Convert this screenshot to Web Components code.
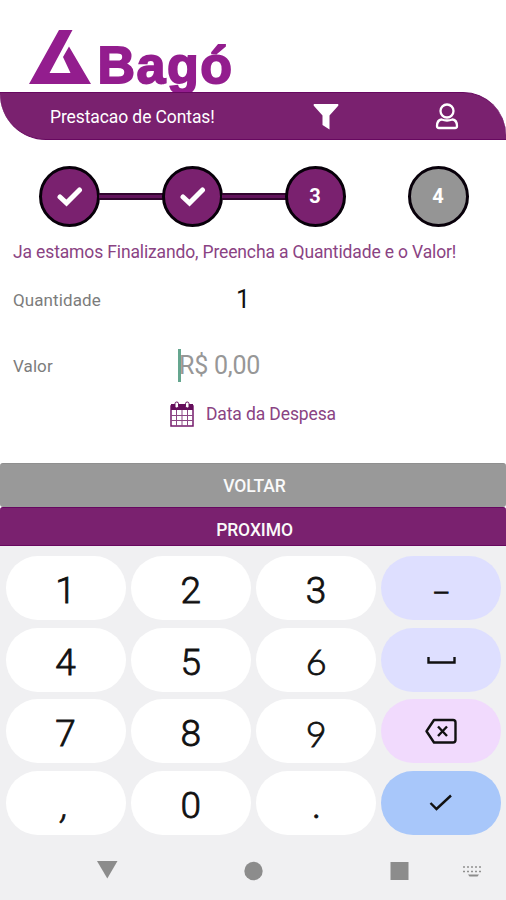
<!DOCTYPE html>
<html lang="pt-BR">
<head>
<meta charset="utf-8">
<title>Prestacao de Contas</title>
<style>
body{margin:0;background:#fff;font-family:Roboto,"Liberation Sans",sans-serif}
</style>
</head>
<body>
<expense-app></expense-app>
<script>
const define = (name, html) => {
  const tpl = document.createElement('template');
  tpl.innerHTML = html;
  customElements.define(name, class extends HTMLElement {
    constructor() {
      super();
      this.attachShadow({mode: 'open'}).append(tpl.content.cloneNode(true));
    }
  });
};

define('brand-logo', `
<style>
:host{display:flex;height:92px;box-sizing:border-box;padding:30px 0 0 29px;color:#931d8e}
svg{flex:none;width:62px;height:54px}
span{font:bold 52px/60px "Liberation Sans",Arial,sans-serif;margin:5px 0 0 6.500px;letter-spacing:1.5px;-webkit-text-stroke:1.8px #931d8e;white-space:nowrap}
</style>
<svg viewBox="0 0 62 54" fill="currentColor"><path d="M30 0H43.500L20.500 43H41.500L34 27L40 16.500L62 54H0Z"/></svg>
<span>Bagó</span>`);

define('title-bar', `
<style>
:host{display:flex;position:relative;align-items:center;height:48px;box-sizing:border-box;background:#7a216f;border-top:1px solid #670860;border-bottom:1px solid #670860;color:#fff;border-radius:0 43px 0 46px;padding:1px 47px 0 50px}
h1{font-size:17.500px;font-weight:400;margin:0;width:263px;white-space:nowrap;letter-spacing:-.1px}
.user{margin-left:auto}
svg{display:block}
</style>
<h1>Prestacao de Contas!</h1>
<svg width="26" height="27" viewBox="0 0 26 27" fill="#fff"><path d="M1 1H25Q26 2 25 3L16.500 12.500V26.500L9.500 22V12.500L1 3Q0 2 1 1Z"/></svg>
<svg class="user" width="24" height="27" viewBox="0 0 24 27" fill="none" stroke="#fff" stroke-width="2.300"><circle cx="12" cy="8" r="6.500"/><path d="M6.500 16.500C3.500 17 2 19.500 2 23Q2 25 4 25H20Q22 25 22 23C22 19.500 20.500 17 17.500 16.500Q12 18.500 6.500 16.500Z"/></svg>`);

define('step-dot', `
<style>
:host{display:flex;align-items:center;justify-content:center;flex:none;box-sizing:border-box;width:61px;height:61px;border:3.500px solid #08000a;border-radius:50%;background:#7a216f;color:#fff;font-weight:700;font-size:20px}
:host([pending]){background:#959595}
</style><slot></slot>`);

define('step-track', `
<style>
:host{display:flex;align-items:center;height:61px;padding:25.500px 37.500px 0 38.500px}
i{flex:1;height:7px;box-sizing:border-box;background:#62145c;border:solid #32062f;border-width:2px 0;margin:0 -1px}
i.off{visibility:hidden}
svg{display:block;width:27px;height:23px;fill:none;stroke:#fff;stroke-width:5;stroke-linecap:round}
</style>
<step-dot><svg viewBox="0 0 27 23"><path d="M4 12L10.500 18L23.500 5"/></svg></step-dot><i></i>
<step-dot><svg viewBox="0 0 27 23"><path d="M4 12L10.500 18L23.500 5"/></svg></step-dot><i></i>
<step-dot>3</step-dot><i class="off"></i><step-dot pending>4</step-dot>`);

define('expense-form', `
<style>
:host{display:block;height:236.500px;color:#7c7c7c;font-size:17px;white-space:nowrap}
p{margin:0;padding:13px 13px 0;line-height:24px;color:#8a4383;font-size:17.500px;letter-spacing:-.14px}
.row{display:flex;align-items:center;padding-left:13px}
.q{height:30px;margin-top:21px}.v{height:36px;margin-top:33px}
label{width:166px;letter-spacing:.1px}
.one{font-size:25px;color:#111;padding-left:57px}
.val{display:flex;align-items:center;font-size:25px;color:#979797;letter-spacing:-.25px}
.val i{width:3px;height:33px;background:#65a68f;margin:0 -2px 0 -1px}
.date{display:flex;align-items:center;gap:12px;padding:16px 0 0 170px;color:#8a4383;font-size:17.500px;height:28px;letter-spacing:-.12px}
svg{display:block}
</style>
<p>Ja estamos Finalizando, Preencha a Quantidade e o Valor!</p>
<div class="row q"><label>Quantidade</label><span class="one">1</span></div>
<div class="row v"><label>Valor</label><span class="val"><i></i>R$ 0,00</span></div>
<div class="date"><svg width="24" height="26" viewBox="0 0 24 26"><path fill="#fff" stroke="#761b6c" stroke-width="1.500" d="M1 5H23V25H1Z"/><path fill="#650e5b" d="M1 3H23V9H1Z"/><path stroke="#8b4784" stroke-width="1" d="M6.500 9V25M12 9V25M17.500 9V25M1 14.500H23M1 19.500H23"/><rect x="5" y="1" width="3.500" height="6" rx="1.700" fill="#fff" stroke="#650e5b"/><rect x="15.500" y="1" width="3.500" height="6" rx="1.700" fill="#fff" stroke="#650e5b"/></svg><span>Data da Despesa</span></div>`);

define('wide-button', `
<style>
:host{display:flex;align-items:center;justify-content:center;box-sizing:border-box;height:44px;padding-top:1px;background:#999;color:#fafafa;border-radius:3px;border-top:1px solid #8f8f8f;font-size:17.500px;font-weight:500;padding-left:3px;letter-spacing:-.1px}
:host([primary]){height:39px;padding-top:6px;background:#7a216f;border-radius:3px 3px 0 0;border-top:1px solid #670860;border-bottom:1px solid #68085f}
</style><slot></slot>`);

define('pad-key', `
<style>
:host{display:flex;align-items:center;justify-content:center;height:64px;border-radius:32px;background:#fff;color:#111;font:300 37px/64px Roboto,sans-serif;-webkit-text-stroke:.8px #111;box-sizing:border-box;padding-top:6px}
:host([round]){font:300 36px/64px Lato,sans-serif;padding-top:3px}
:host([slanted]) slot{display:block;transform:skewX(-12deg)}
:host([tone=blue]){background:#dedfff;padding-top:0;font-size:28px}
:host([dash]){padding-top:11px!important}
:host([tone=pink]){background:#f1dafd;padding-top:0}
:host([tone=go]){background:#a8c7fa;padding-top:0}
</style><slot></slot>`);

define('num-pad', `
<style>
:host{display:grid;grid-template-columns:repeat(4,120px);gap:7.200px 5.300px;padding:10px 0 0 5.500px;background:#f0f0f2;height:279px}
svg{display:block;fill:none;stroke:#111;stroke-width:2.400}
</style>
<pad-key>1</pad-key><pad-key>2</pad-key><pad-key>3</pad-key>
<pad-key tone="blue" dash>–</pad-key>
<pad-key>4</pad-key><pad-key>5</pad-key><pad-key round>6</pad-key>
<pad-key tone="blue"><svg width="32" height="24"><path d="M3.500 9V14.500H29.500V9"/></svg></pad-key>
<pad-key>7</pad-key><pad-key>8</pad-key><pad-key round>9</pad-key>
<pad-key tone="pink"><svg width="34" height="28"><path stroke-linejoin="round" d="M10 3H29Q31.500 3 31.500 5.500V23Q31.500 25.500 29 25.500H10L2.500 14.250ZM14 9.500L23 19M23 9.500L14 19"/></svg></pad-key>
<pad-key slanted>,</pad-key>
<pad-key>0</pad-key>
<pad-key round>.</pad-key>
<pad-key tone="go"><svg width="28" height="24"><path d="M3.500 12L9.500 18L24 4.500"/></svg></pad-key>`);

define('nav-bar', `
<style>
:host{display:grid;grid-template-columns:97px 137px 136px 93px 43px;align-items:center;background:#f0f0f2;height:65px;box-sizing:border-box;padding-top:6px}
svg{display:block;fill:#8c8c8c}
</style>
<span></span>
<svg width="21" height="20"><path d="M0 0H20.500L10.300 17.500Z"/></svg>
<svg width="40" height="20"><circle cx="19.500" cy="10" r="9.200"/></svg>
<svg width="40" height="20"><path d="M20.500 1H38.500V19H20.500Z"/></svg>
<svg width="22" height="16"><path fill="none" stroke="#909090" stroke-width="1.700" stroke-dasharray="2 2" d="M0 4H20M0 8.500H20"/><path d="M5 11.500H16L14.500 13.500H6.500Z"/></svg>`);

define('expense-app', `
<style>:host{display:block;width:506px;height:900px;overflow:hidden}</style>
<brand-logo></brand-logo>
<title-bar></title-bar>
<step-track></step-track>
<expense-form></expense-form>
<wide-button>VOLTAR</wide-button>
<wide-button primary>PROXIMO</wide-button>
<num-pad></num-pad>
<nav-bar></nav-bar>`);
</script>
</body>
</html>
